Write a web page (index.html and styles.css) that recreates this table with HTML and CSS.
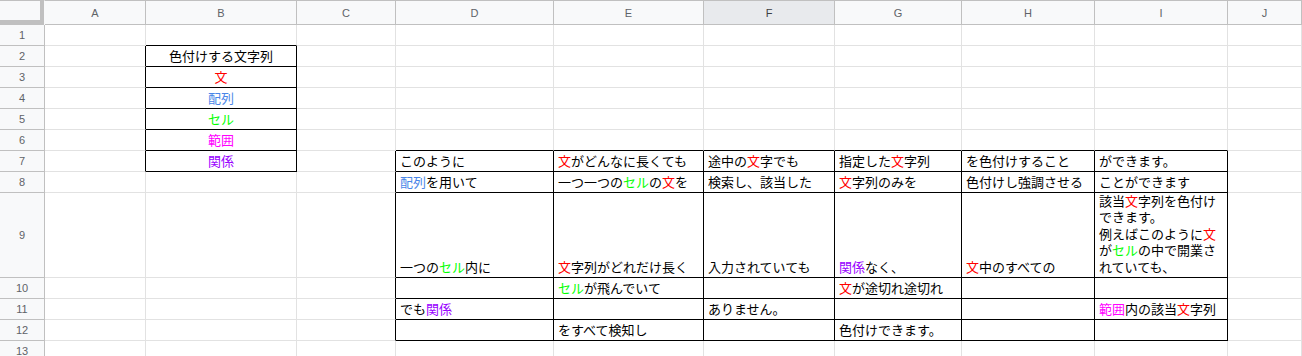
FILE: index.html
```html
<!DOCTYPE html>
<html lang="ja">
<head>
<meta charset="utf-8">
<title>Sheet</title>
<link rel="stylesheet" href="styles.css">
</head>
<body>
<div class="sheet">
  <div class="corner"></div>
  <div class="h">A</div><div class="h">B</div><div class="h">C</div><div class="h">D</div><div class="h">E</div><div class="h sel">F</div><div class="h">G</div><div class="h">H</div><div class="h">I</div><div class="h">J</div>

  <div class="r">1</div>
  <div class="c"></div><div class="c bb"></div><div class="c"></div><div class="c"></div><div class="c"></div><div class="c"></div><div class="c"></div><div class="c"></div><div class="c"></div><div class="c"></div>

  <div class="r">2</div>
  <div class="c br"></div><div class="c br bb ctr">色付けする文字列</div><div class="c"></div><div class="c"></div><div class="c"></div><div class="c"></div><div class="c"></div><div class="c"></div><div class="c"></div><div class="c"></div>

  <div class="r">3</div>
  <div class="c br"></div><div class="c br bb ctr"><span class="red">文</span></div><div class="c"></div><div class="c"></div><div class="c"></div><div class="c"></div><div class="c"></div><div class="c"></div><div class="c"></div><div class="c"></div>

  <div class="r">4</div>
  <div class="c br"></div><div class="c br bb ctr"><span class="blu">配列</span></div><div class="c"></div><div class="c"></div><div class="c"></div><div class="c"></div><div class="c"></div><div class="c"></div><div class="c"></div><div class="c"></div>

  <div class="r">5</div>
  <div class="c br"></div><div class="c br bb ctr"><span class="grn">セル</span></div><div class="c"></div><div class="c"></div><div class="c"></div><div class="c"></div><div class="c"></div><div class="c"></div><div class="c"></div><div class="c"></div>

  <div class="r">6</div>
  <div class="c br"></div><div class="c br bb ctr"><span class="mag">範囲</span></div><div class="c"></div><div class="c bb"></div><div class="c bb"></div><div class="c bb"></div><div class="c bb"></div><div class="c bb"></div><div class="c bb"></div><div class="c"></div>

  <div class="r">7</div>
  <div class="c br"></div><div class="c br bb ctr"><span class="pur">関係</span></div><div class="c br"></div>
  <div class="c br bb">このように</div>
  <div class="c br bb"><span class="red">文</span>がどんなに長くても</div>
  <div class="c br bb">途中の<span class="red">文</span>字でも</div>
  <div class="c br bb">指定した<span class="red">文</span>字列</div>
  <div class="c br bb">を色付けすること</div>
  <div class="c br bb">ができます。</div>
  <div class="c"></div>

  <div class="r">8</div>
  <div class="c"></div><div class="c"></div><div class="c br"></div>
  <div class="c br bb"><span class="blu">配列</span>を用いて</div>
  <div class="c br bb">一つ一つの<span class="grn">セル</span>の<span class="red">文</span>を</div>
  <div class="c br bb">検索し、該当した</div>
  <div class="c br bb"><span class="red">文</span>字列のみを</div>
  <div class="c br bb">色付けし強調させる</div>
  <div class="c br bb">ことができます</div>
  <div class="c"></div>

  <div class="r">9</div>
  <div class="c"></div><div class="c"></div><div class="c br"></div>
  <div class="c br bb">一つの<span class="grn">セル</span>内に</div>
  <div class="c br bb"><span class="red">文</span>字列がどれだけ長く</div>
  <div class="c br bb">入力されていても</div>
  <div class="c br bb"><span class="pur">関係</span>なく、</div>
  <div class="c br bb"><span class="red">文</span>中のすべての</div>
  <div class="c br bb"><div class="lines">該当<span class="red">文</span>字列を色付け<br>できます。<br>例えばこのように<span class="red">文</span><br>が<span class="grn">セル</span>の中で開業さ<br>れていても、</div></div>
  <div class="c"></div>

  <div class="r">10</div>
  <div class="c"></div><div class="c"></div><div class="c br"></div>
  <div class="c br bb"></div>
  <div class="c br bb"><span class="grn">セル</span>が飛んでいて</div>
  <div class="c br bb"></div>
  <div class="c br bb"><span class="red">文</span>が途切れ途切れ</div>
  <div class="c br bb"></div>
  <div class="c br bb"></div>
  <div class="c"></div>

  <div class="r">11</div>
  <div class="c"></div><div class="c"></div><div class="c br"></div>
  <div class="c br bb">でも<span class="pur">関係</span></div>
  <div class="c br bb"></div>
  <div class="c br bb">ありません。</div>
  <div class="c br bb"></div>
  <div class="c br bb"></div>
  <div class="c br bb"><span class="mag">範囲</span>内の該当<span class="red">文</span>字列</div>
  <div class="c"></div>

  <div class="r">12</div>
  <div class="c"></div><div class="c"></div><div class="c br"></div>
  <div class="c br bb"></div>
  <div class="c br bb">をすべて検知し</div>
  <div class="c br bb"></div>
  <div class="c br bb">色付けできます。</div>
  <div class="c br bb"></div>
  <div class="c br bb"></div>
  <div class="c"></div>

  <div class="r">13</div>
  <div class="c"></div><div class="c"></div><div class="c"></div><div class="c"></div><div class="c"></div><div class="c"></div><div class="c"></div><div class="c"></div><div class="c"></div><div class="c"></div>
</div>
</body>
</html>
```

FILE: styles.css
```css
html, body {
  margin: 0;
  padding: 0;
  background: #ffffff;
  overflow: hidden;
}

.sheet {
  display: grid;
  grid-template-columns: 45px 101px 151px 99px 158px 150px 131px 127px 133px 133px 1fr;
  grid-template-rows: 25px repeat(8, 21px) 85px repeat(4, 21px);
  width: 1302px;
  font-family: "Noto Sans CJK JP", "Noto Sans", sans-serif;
  font-size: 13px;
  color: #000000;
}

.corner {
  box-sizing: border-box;
  background: #f8f9fa;
  border-top: 1px solid #c0c0c0;
  border-right: 1px solid #f8f9fa;
  box-shadow: inset -4px -5px 0 #c0c0c0;
}

.h {
  box-sizing: border-box;
  background: #f8f9fa;
  border-top: 1px solid #c0c0c0;
  border-right: 1px solid #c0c0c0;
  border-bottom: 1px solid #c0c0c0;
  font-family: "Liberation Sans", Arial, sans-serif;
  font-size: 11px;
  color: #5f6368;
  display: flex;
  align-items: center;
  justify-content: center;
  padding-top: 1px;
}

.h.sel {
  background: #e8eaed;
  color: #3c4043;
}

.r {
  box-sizing: border-box;
  background: #f8f9fa;
  border-right: 1px solid #c0c0c0;
  border-bottom: 1px solid #c0c0c0;
  font-family: "Liberation Sans", Arial, sans-serif;
  font-size: 11px;
  color: #5f6368;
  display: flex;
  align-items: center;
  justify-content: center;
}

.c {
  box-sizing: border-box;
  border-right: 1px solid #e2e2e2;
  border-bottom: 1px solid #e2e2e2;
  padding: 0 3px 2px 4px;
  display: flex;
  align-items: flex-end;
  white-space: nowrap;
  line-height: 16px;
  min-width: 0;
}

.c.ctr {
  justify-content: center;
  padding-left: 3px;
}

.c.br {
  border-right-color: #000000;
}

.c.bb {
  border-bottom-color: #000000;
}

.lines {
  line-height: 16.5px;
}

.red { color: #ff0000; }
.blu { color: #4a86e8; }
.grn { color: #00ff00; }
.mag { color: #ff00ff; }
.pur { color: #9900ff; }
```
